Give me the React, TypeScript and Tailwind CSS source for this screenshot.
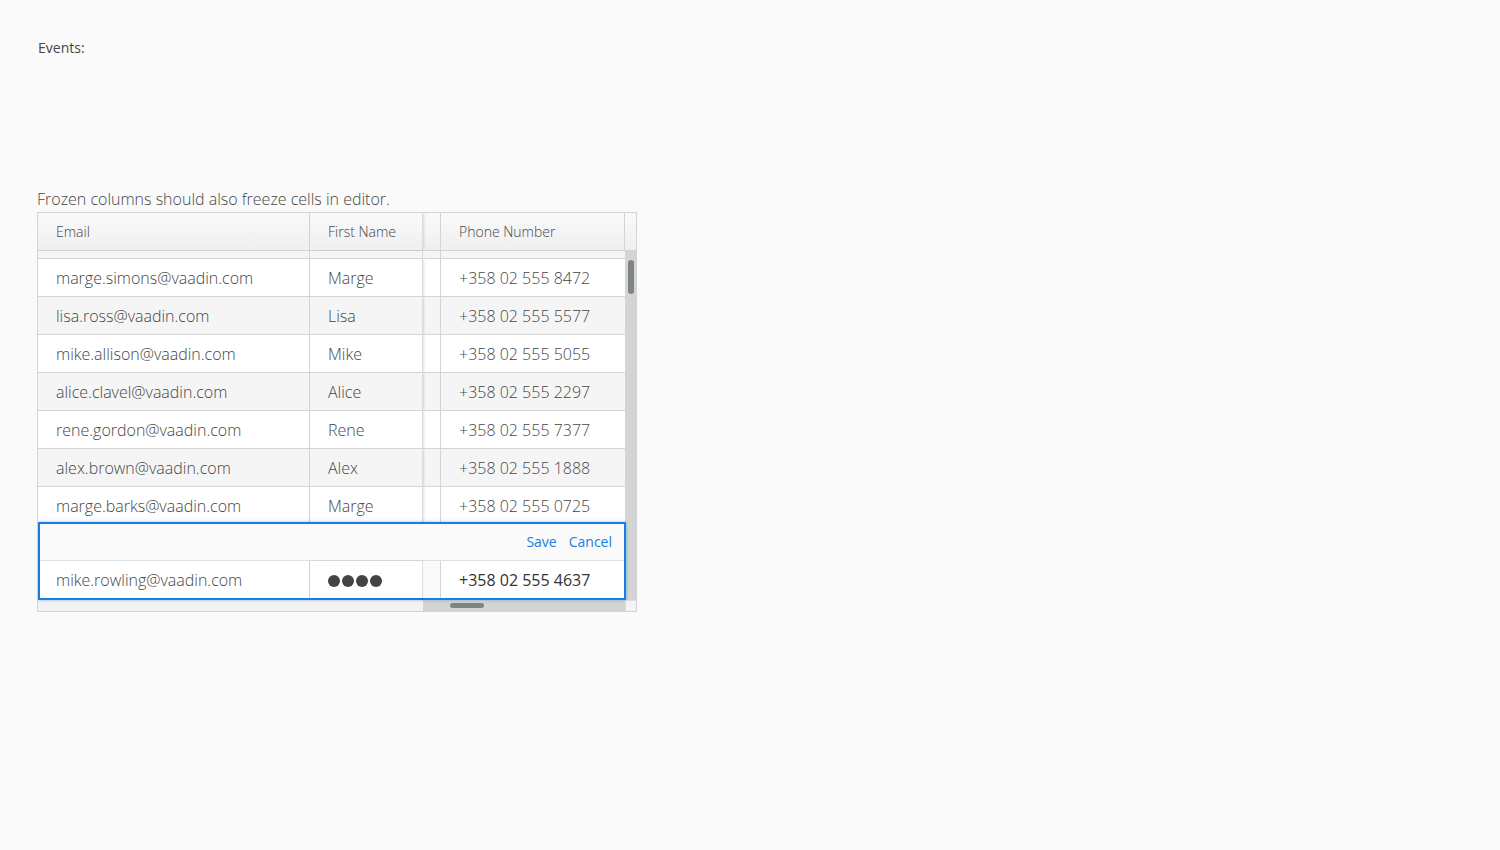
import React from "react";

const ROWS = [
  { email: "marge.simons@vaadin.com", first: "Marge", phone: "+358 02 555 8472" },
  { email: "lisa.ross@vaadin.com", first: "Lisa", phone: "+358 02 555 5577" },
  { email: "mike.allison@vaadin.com", first: "Mike", phone: "+358 02 555 5055" },
  { email: "alice.clavel@vaadin.com", first: "Alice", phone: "+358 02 555 2297" },
  { email: "rene.gordon@vaadin.com", first: "Rene", phone: "+358 02 555 7377" },
  { email: "alex.brown@vaadin.com", first: "Alex", phone: "+358 02 555 1888" },
  { email: "marge.barks@vaadin.com", first: "Marge", phone: "+358 02 555 0725" },
];

function Row({ r, odd }: { r?: typeof ROWS[number]; odd: boolean }) {
  const bg = odd ? "bg-[#f5f5f5]" : "bg-white";
  return (
    <div className={`flex h-[38px] border-t border-[#d4d4d4] ${bg} shrink-0 overflow-hidden`}>
      <div className="w-[272px] shrink-0 flex items-center pl-[18px] border-r border-[#d4d4d4]">{r?.email}</div>
      <div className="w-[113px] shrink-0 flex items-center pl-[18px] shadow-[1px_0_2px_rgba(0,0,0,0.12)] border-r border-[#dcdcdc]">{r?.first}</div>
      <div className="w-[18px] shrink-0 border-r border-[#d4d4d4]" />
      <div className="w-[184px] shrink-0 flex items-center pl-[18px]">{r?.phone}</div>
    </div>
  );
}

export default function App() {
  return (
    <div
      className="min-h-[850px] bg-[#fafafa] text-[#464646]"
      style={{ fontFamily: '"Open Sans", "Liberation Sans", sans-serif' }}
    >
      <div className="pt-[39px] pl-[38px] text-[14px] leading-[18px]">Events:</div>

      <div className="mt-[132px] ml-[37px] w-[600px]">
        <div className="text-[16px] font-light leading-[20px] mb-[3px]">Frozen columns should also freeze cells in editor.</div>

        <div className="relative w-[600px] h-[400px] border border-[#d4d4d4] flex flex-col font-light overflow-hidden">
          {/* header */}
          <div className="flex h-[38px] shrink-0 bg-gradient-to-b from-[#fafafa] to-[#efefef] text-[14px] border-b border-[#d4d4d4]">
            <div className="w-[272px] shrink-0 flex items-center pl-[18px] border-r border-[#d4d4d4]">Email</div>
            <div className="w-[113px] shrink-0 flex items-center pl-[18px] border-r border-[#dcdcdc] shadow-[1px_0_2px_rgba(0,0,0,0.12)]">First Name</div>
            <div className="w-[18px] shrink-0 border-r border-[#d4d4d4]" />
            <div className="w-[184px] shrink-0 flex items-center pl-[18px] border-r border-[#d4d4d4]">Phone Number</div>
            <div className="flex-1" />
          </div>

          {/* body */}
          <div className="flex h-[349px] shrink-0">
            <div className="w-[587px] shrink-0 flex flex-col text-[16px] overflow-hidden">
              <div className="h-[7px] shrink-0 flex bg-[#f5f5f5]">
                <div className="w-[272px] border-r border-[#d4d4d4]" />
                <div className="w-[113px] border-r border-[#dcdcdc]" />
                <div className="w-[18px] border-r border-[#d4d4d4]" />
              </div>
              {ROWS.map((r, i) => (
                <Row key={r.email} r={r} odd={i % 2 === 1} />
              ))}
              <Row odd={true} />
            </div>
            <div className="flex-1 bg-[#d4d4d4] flex justify-center pt-[9px]">
              <div className="w-[6px] h-[34px] rounded-[3px] bg-[#7f8484]" />
            </div>
          </div>

          {/* horizontal scroll */}
          <div className="flex h-[11px] shrink-0">
            <div className="w-[385px] bg-[#f2f2f2]" />
            <div className="w-[202px] bg-[#d4d4d4] pl-[27px] pt-[3px]">
              <div className="w-[34px] h-[5px] rounded-[3px] bg-[#7f8484]" />
            </div>
            <div className="flex-1 bg-[#f4f4f4] border-l border-t border-[#dedede]" />
          </div>

          {/* editor overlay */}
          <div className="absolute left-0 top-[309px] w-[588px] h-[78px] border-2 border-[#197de1] shadow-[0_0_3px_rgba(25,125,225,0.5)] flex flex-col text-[16px] bg-[#fafafa]">
            <div className="h-[37px] flex items-center justify-end gap-[12px] pr-[12px] pb-[2px] text-[14px] font-normal text-[#197de1] border-b border-[#e0e0e0]">
              <span>Save</span>
              <span>Cancel</span>
            </div>
            <div className="flex flex-1 bg-white">
              <div className="w-[270px] shrink-0 flex items-center pl-[16px] border-r border-[#d4d4d4]">mike.rowling@vaadin.com</div>
              <div className="w-[113px] shrink-0 flex items-center gap-[2px] pl-[18px] pt-[3px] border-r border-[#dcdcdc] shadow-[1px_0_2px_rgba(0,0,0,0.15)]">
                {[0, 1, 2, 3].map((i) => (
                  <div key={i} className="w-[12px] h-[12px] rounded-full bg-[#444]" />
                ))}
              </div>
              <div className="w-[18px] shrink-0 bg-[#fafafa] border-r border-[#d4d4d4]" />
              <div className="flex-1 flex items-center pl-[18px] font-normal text-[#333]">+358 02 555 4637</div>
            </div>
          </div>
        </div>
      </div>
    </div>
  );
}
